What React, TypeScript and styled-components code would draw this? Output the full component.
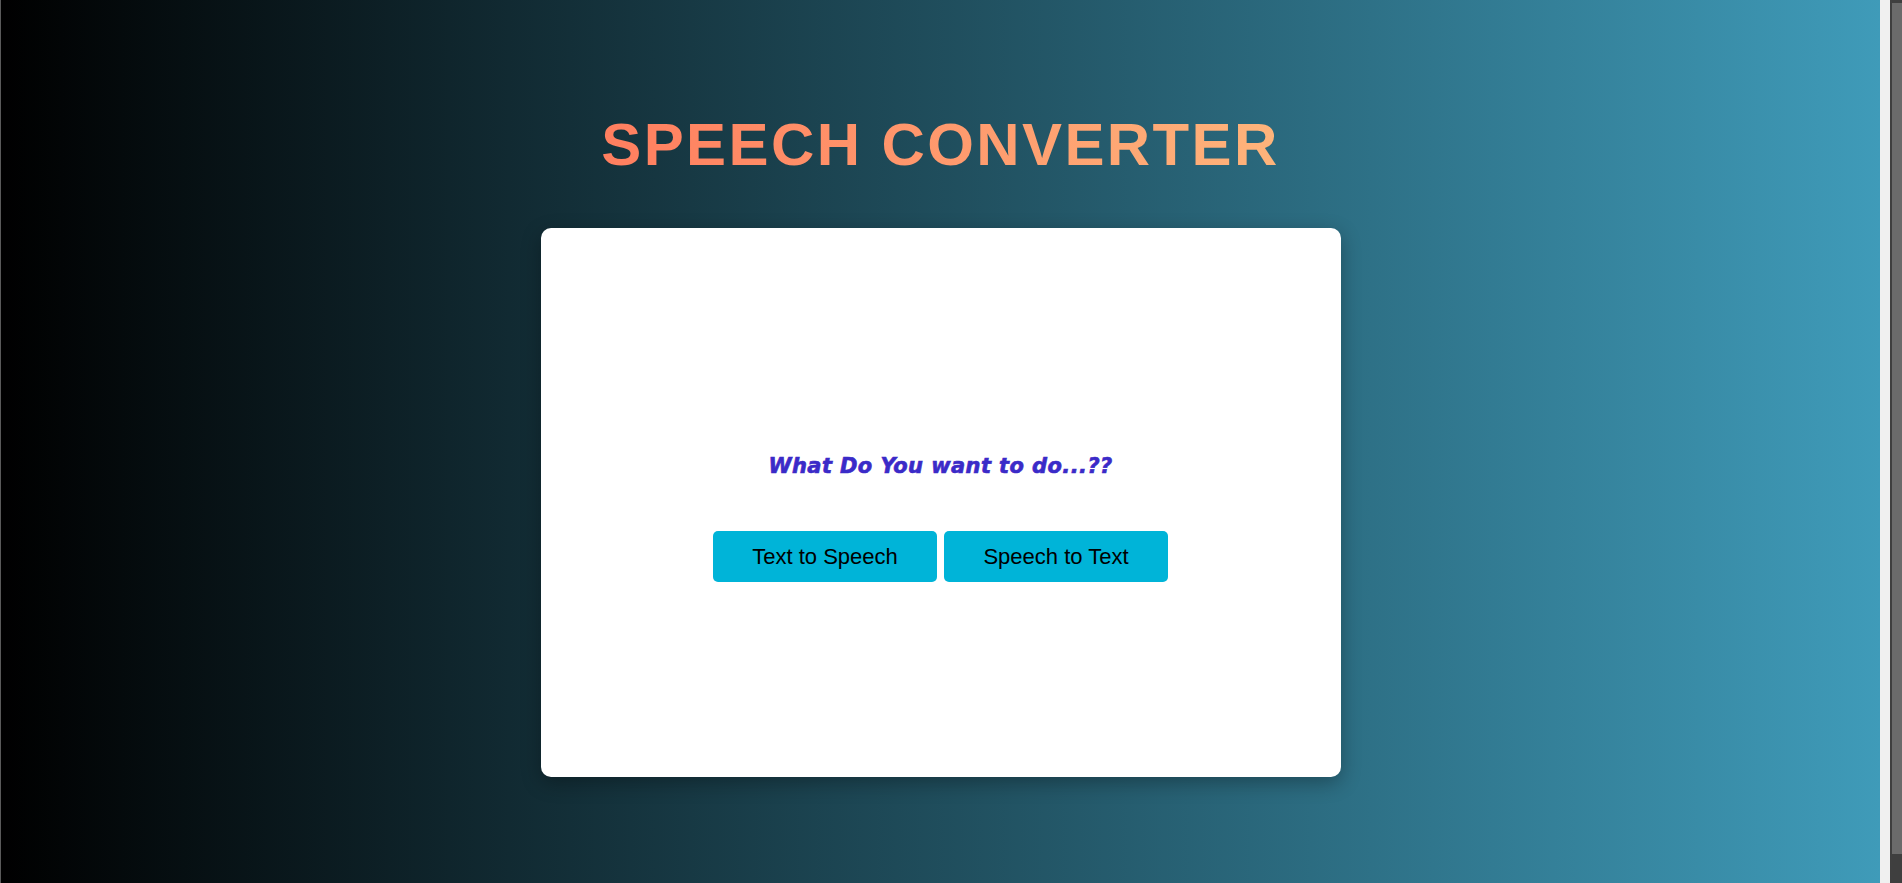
import styled, { createGlobalStyle } from "styled-components";

const GlobalStyle = createGlobalStyle`
  html, body {
    margin: 0;
    padding: 0;
    height: 100%;
    overflow: hidden;
  }
  body {
    font-family: "Liberation Sans", Arial, sans-serif;
  }
`;

const Screen = styled.div`
  display: flex;
  width: 100%;
  height: 883px;
`;

const Page = styled.main`
  flex: 1;
  display: flex;
  flex-direction: column;
  align-items: center;
  padding-top: 110px;
  border-left: 1px solid #5a5a5a;
  background: linear-gradient(to right, #000000, #3f9bb9);
`;

const Title = styled.h1`
  margin: 0 0 49px;
  font-family: "Liberation Sans", Arial, sans-serif;
  font-size: 60px;
  line-height: 69px;
  font-weight: 700;
  letter-spacing: 2.4px;
  text-transform: uppercase;
  background: linear-gradient(to right, #ff7e5f, #feb47b);
  -webkit-background-clip: text;
  background-clip: text;
  color: transparent;
`;

const Card = styled.section`
  box-sizing: border-box;
  width: 800px;
  height: 549px;
  padding-top: 226px;
  display: flex;
  flex-direction: column;
  align-items: center;
  background: #ffffff;
  border-radius: 10px;
  box-shadow: 0 6px 20px rgba(0, 0, 0, 0.3);
`;

const Question = styled.h2`
  margin: 0 0 53px;
  font-family: "DejaVu Sans", Verdana, sans-serif;
  font-size: 21px;
  line-height: 24px;
  font-weight: 700;
  font-style: italic;
  letter-spacing: 0.4px;
  color: #3a2bc8;
  -webkit-text-stroke: 0.6px #3a2bc8;
  text-shadow: -0.5px 0 rgba(255, 80, 140, 0.3);
`;

const ButtonRow = styled.div`
  display: flex;
  gap: 7px;
`;

const ChoiceButton = styled.button`
  width: 224px;
  height: 51px;
  border: none;
  border-radius: 5px;
  background: #00b4d8;
  color: #000000;
  font-family: "Liberation Sans", Arial, sans-serif;
  font-size: 22px;
  cursor: pointer;
`;

const Strip = styled.aside`
  display: flex;
  width: 22px;
`;

const Track = styled.div`
  width: 10px;
  background: #f0f0f0;
`;

const Edge = styled.div`
  width: 2px;
  background: #3f3f3f;
`;

const Panel = styled.div`
  flex: 1;
  display: flex;
  flex-direction: column;
  background: #3f3f3f;
  padding-top: 3px;
`;

const PanelFill = styled.div`
  height: 851px;
  background: #6b6b6b;
`;

export default function App() {
  return (
    <>
      <GlobalStyle />
      <Screen>
        <Page>
          <Title>Speech Converter</Title>
          <Card>
            <Question>What Do You want to do...??</Question>
            <ButtonRow>
              <ChoiceButton>Text to Speech</ChoiceButton>
              <ChoiceButton>Speech to Text</ChoiceButton>
            </ButtonRow>
          </Card>
        </Page>
        <Strip>
          <Track />
          <Edge />
          <Panel>
            <PanelFill />
          </Panel>
        </Strip>
      </Screen>
    </>
  );
}
